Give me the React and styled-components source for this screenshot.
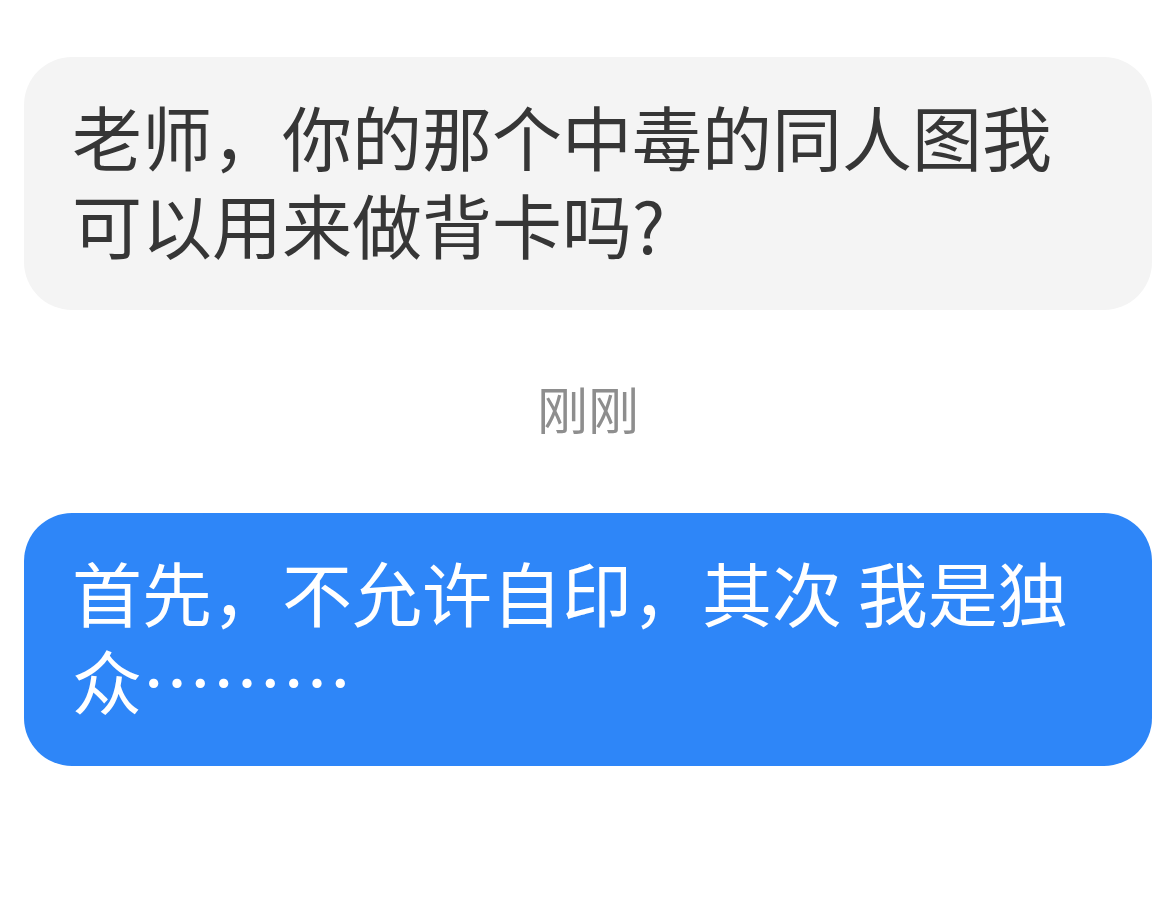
import React from "react";
import styled, { createGlobalStyle } from "styled-components";

const GlobalStyle = createGlobalStyle`
  html, body {
    margin: 0;
    padding: 0;
    background: #ffffff;
  }
  body {
    font-family: "Noto Sans CJK SC", "Noto Sans", sans-serif;
  }
`;

const Chat = styled.div`
  width: 100%;
  min-height: 907px;
  box-sizing: border-box;
  padding: 57px 24px 0 24px;
  display: flex;
  flex-direction: column;
`;

const Bubble = styled.div`
  box-sizing: border-box;
  width: 100%;
  padding: 35px 48px 42px 48px;
  border-radius: 48px;
  background-color: ${({ mine }) => (mine ? "#2e86f8" : "#f4f4f4")};
  color: ${({ mine }) => (mine ? "#ffffff" : "#363636")};
  font-size: 70px;
  line-height: 88px;
  word-break: break-all;
`;

const Time = styled.div`
  margin: 68px 0 75px 0;
  text-align: center;
  font-size: 51px;
  line-height: 60px;
  color: #8e8e8e;
`;

export default function App() {
  const messages = [
    { id: 1, mine: false, text: "老师，你的那个中毒的同人图我可以用来做背卡吗?" },
    { id: 2, mine: true, text: "首先，不允许自印，其次 我是独众………" }
  ];

  return (
    <>
      <GlobalStyle />
      <Chat>
        <Bubble mine={messages[0].mine}>{messages[0].text}</Bubble>
        <Time>刚刚</Time>
        <Bubble mine={messages[1].mine}>{messages[1].text}</Bubble>
      </Chat>
    </>
  );
}
